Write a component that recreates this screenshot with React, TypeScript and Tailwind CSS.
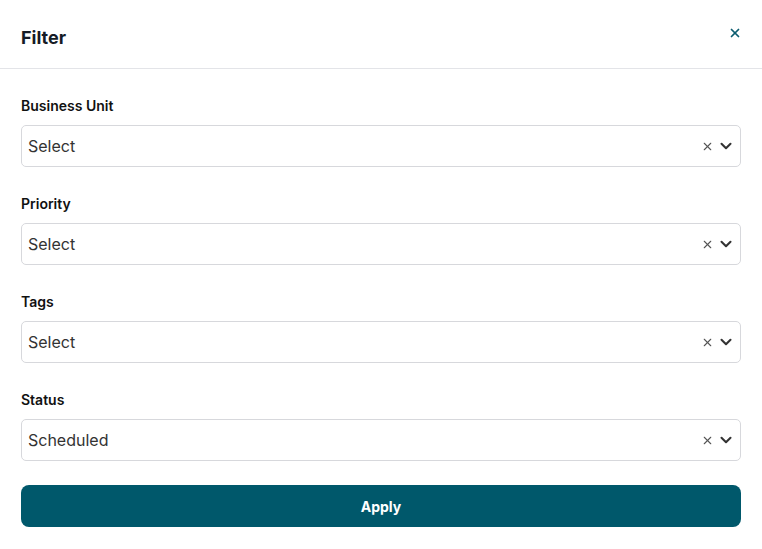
import { X, ChevronDown } from "lucide-react";

const fields = [
  { label: "Business Unit", value: "Select" },
  { label: "Priority", value: "Select" },
  { label: "Tags", value: "Select" },
  { label: "Status", value: "Scheduled" },
];

const FilterModal = () => {
  return (
    <div
      className="w-[762px] h-[549px] bg-white rounded-tl-md overflow-hidden"
      style={{ fontFamily: "Inter, 'Noto Sans', sans-serif" }}
    >
      <div className="h-[69px] border-b border-[#e3e4e8] px-[21px] flex items-start justify-between">
        <h2 className="mt-[27px] text-[18px] leading-[22px] font-bold text-[#151b26]">Filter</h2>
        <button className="mt-[26px] mr-[-1px] text-[#0b5c70]">
          <X size={14} strokeWidth={3} />
        </button>
      </div>

      <div className="px-[21px] pt-[28px]">
        <div className="flex flex-col gap-[28px] mb-[24px]">
          {fields.map((f) => (
            <div key={f.label}>
              <label className="block text-[14px] leading-[18px] font-semibold text-[#111] mb-[10px]">
                {f.label}
              </label>
              <div className="h-[42px] border border-[#d7d8dc] rounded-[5px] flex items-center pl-[6px] pr-[5px]">
                <span className="flex-1 text-[16px] text-[#333]">{f.value}</span>
                <X size={13} strokeWidth={2} className="text-[#555] mr-[3px]" />
                <ChevronDown size={18} strokeWidth={2.75} className="text-[#333]" />
              </div>
            </div>
          ))}
        </div>

        <button className="w-full h-[42px] rounded-[8px] bg-[#00586b] text-white text-[14px] font-bold">
          Apply
        </button>
      </div>
    </div>
  );
};

export default function App() {
  return <FilterModal />;
}
